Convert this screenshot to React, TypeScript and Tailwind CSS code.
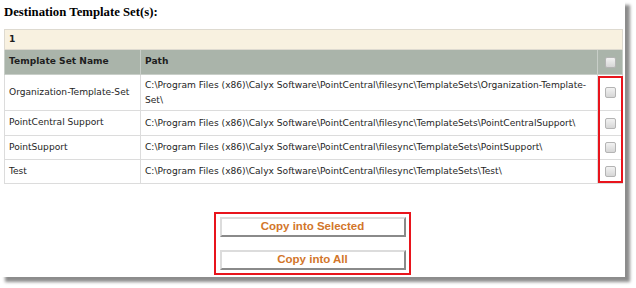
import React from "react";

const rows = [
  {
    name: "Organization-Template-Set",
    path: "C:\\Program Files (x86)\\Calyx Software\\PointCentral\\filesync\\TemplateSets\\Organization-Template-Set\\",
  },
  {
    name: "PointCentral Support",
    path: "C:\\Program Files (x86)\\Calyx Software\\PointCentral\\filesync\\TemplateSets\\PointCentralSupport\\",
  },
  {
    name: "PointSupport",
    path: "C:\\Program Files (x86)\\Calyx Software\\PointCentral\\filesync\\TemplateSets\\PointSupport\\",
  },
  {
    name: "Test",
    path: "C:\\Program Files (x86)\\Calyx Software\\PointCentral\\filesync\\TemplateSets\\Test\\",
  },
];

const Box = () => (
  <div className="mx-auto w-[11px] h-[11px] rounded-[2px] border border-[#b4b4b4] bg-gradient-to-b from-[#f2f2f2] to-[#d6d6d6]" />
);

const Btn = ({ label }: { label: string }) => (
  <div className="w-[186px] h-[20px] flex items-center justify-center bg-white border-2 border-t-[#dcdcdc] border-l-[#dcdcdc] border-b-[#8a8a8a] border-r-[#8a8a8a] text-[#d2762a] font-bold text-[11.5px] font-['Liberation_Sans',Arial,sans-serif]">
    {label}
  </div>
);

const App = () => {
  return (
    <div className="w-[636px] h-[288px] bg-white">
      <div className="w-[625px] h-[277px] bg-white shadow-[5px_5px_3px_rgba(0,0,0,0.45)] flex flex-col">
        <h2 className="pl-[4px] pt-[3px] h-[29px] font-bold text-[12.75px] text-black font-['Liberation_Serif','Times_New_Roman',serif]">
          Destination Template Set(s):
        </h2>

        <div className="relative ml-[4px] w-[619px]">
          <table className="w-full border-collapse text-[9.1px] text-[#1e1e1e] font-['DejaVu_Sans',Verdana,sans-serif]">
            <tbody>
              <tr className="h-[20px] bg-[#f8f1e0]">
                <td colSpan={3} className="border border-[#dedad0] px-[4px] font-bold">
                  1
                </td>
              </tr>
              <tr className="h-[25px] bg-[#aab4aa] font-bold">
                <td className="w-[136px] border border-[#c8cec8] px-[4px]">Template Set Name</td>
                <td className="border border-[#c8cec8] px-[4px]">Path</td>
                <td className="w-[25px] border border-[#c8cec8]">
                  <Box />
                </td>
              </tr>
              {rows.map((row, i) => (
                <tr key={i} className={i === 0 ? "h-[36px]" : i === 1 ? "h-[25px]" : "h-[24px]"}>
                  <td className="border border-[#dcdcdc] px-[4px]">{row.name}</td>
                  <td className="border border-[#dcdcdc] px-[4px] leading-[15px]">{row.path}</td>
                  <td className="border border-[#dcdcdc]">
                    <Box />
                  </td>
                </tr>
              ))}
            </tbody>
          </table>
          <div className="absolute left-[594px] top-[47px] w-[25px] h-[107px] border-2 border-[#e8141c]" />
        </div>

        <div className="mt-[28px] mx-auto w-[197px] h-[63px] border-2 border-[#e8141c] flex flex-col items-center justify-between py-[3px]">
          <Btn label="Copy into Selected" />
          <Btn label="Copy into All" />
        </div>
      </div>
    </div>
  );
};

export default App;
